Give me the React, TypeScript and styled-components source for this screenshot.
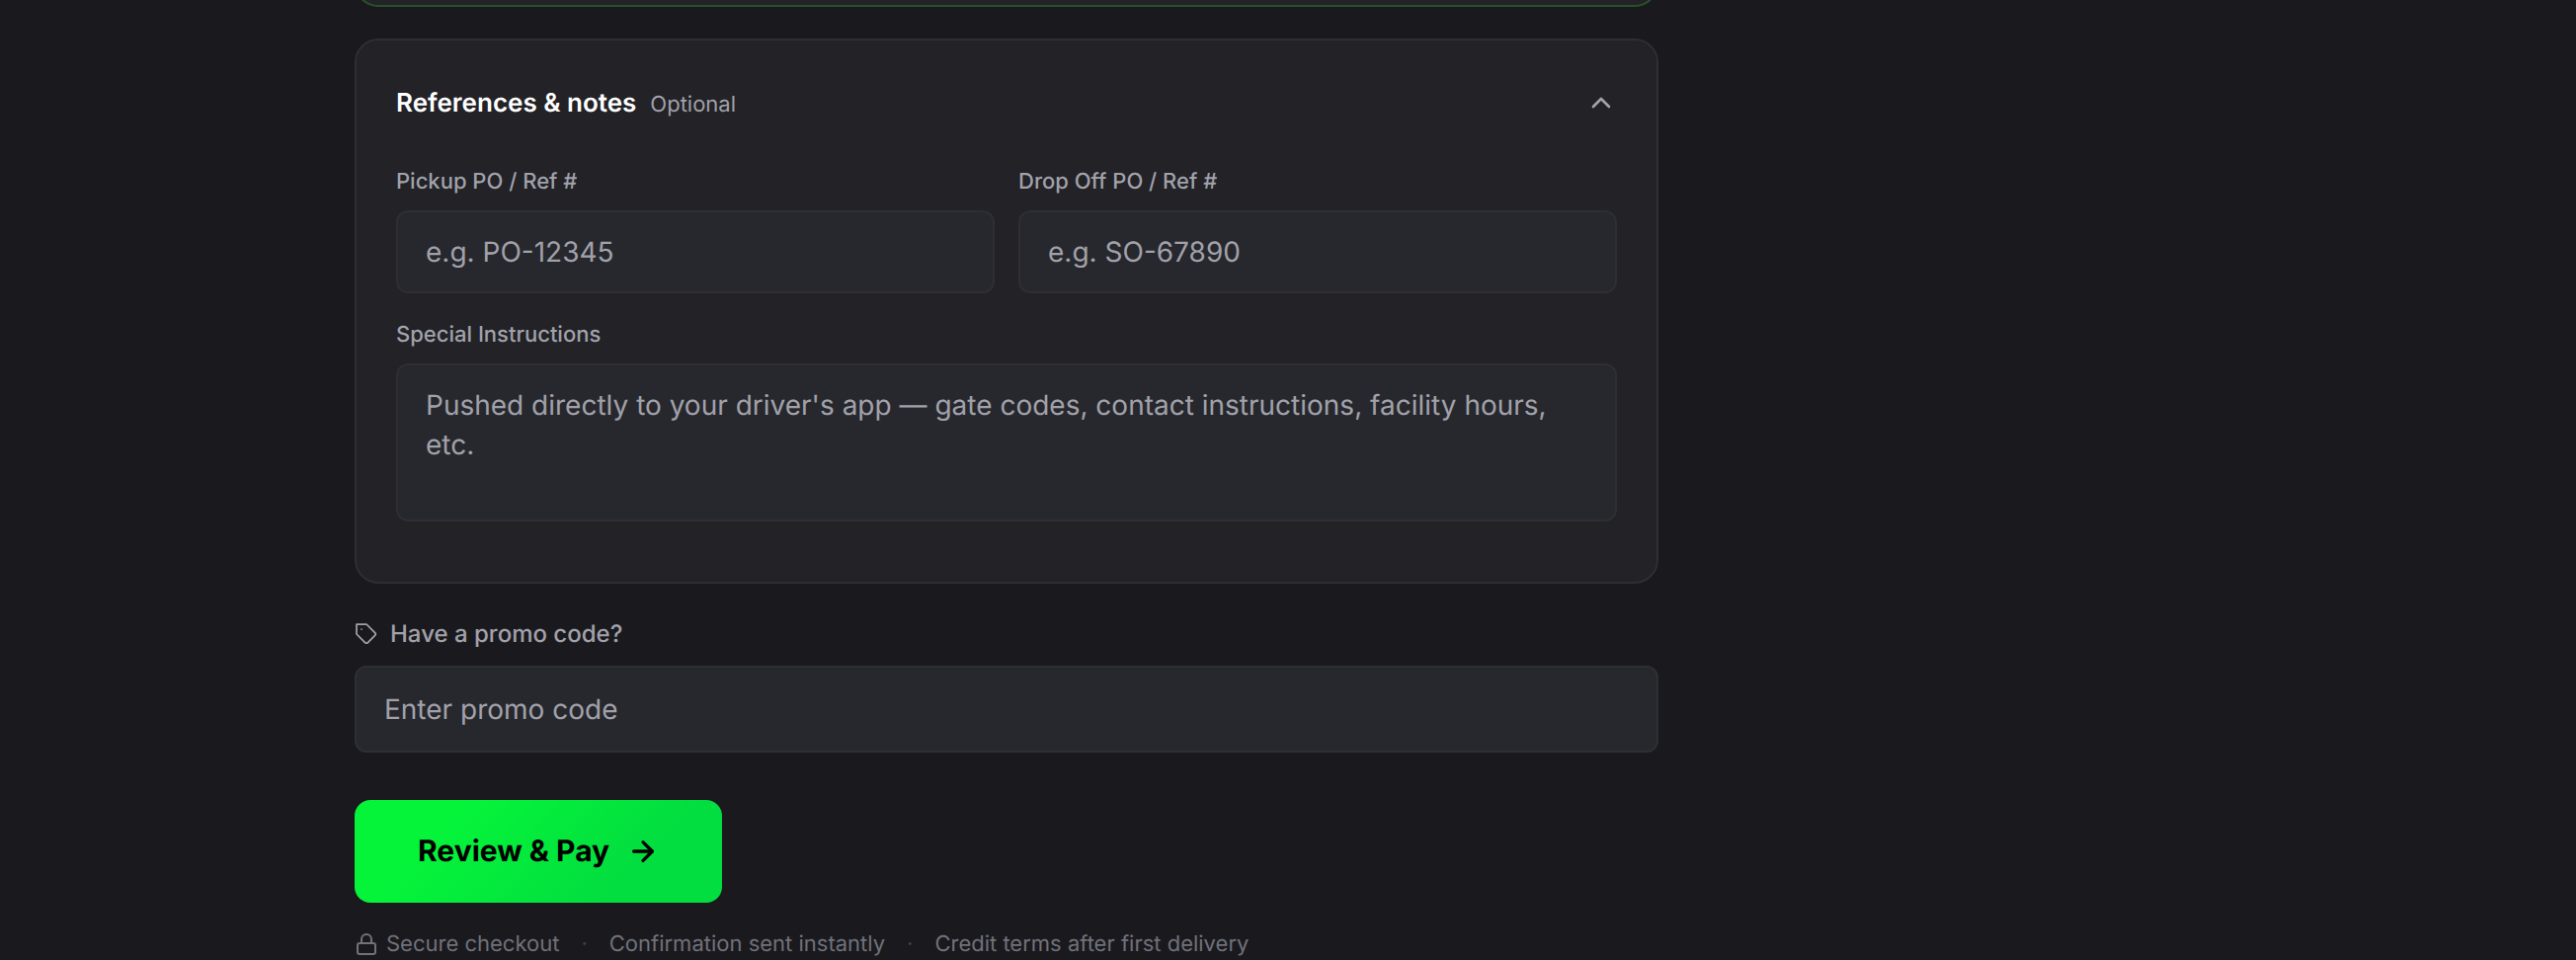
import { useState } from 'react';
import styled, { createGlobalStyle } from 'styled-components';
import { ArrowRight, ChevronUp, Lock } from 'lucide-react';
import { FiTag } from 'react-icons/fi';

const GlobalStyle = createGlobalStyle`
    * {
        box-sizing: border-box;
    }

    body {
        margin: 0;
        background-color: #1a1a1e;
        color: #a1a1aa;
        font-family: Inter, 'Liberation Sans', sans-serif;
        -webkit-font-smoothing: antialiased;
        text-rendering: geometricPrecision;
    }

    button,
    input,
    textarea {
        font-family: inherit;
        text-rendering: inherit;
    }
`;

const PageContainer = styled.main`
    max-width: 1890px;
    margin: 0 auto;
`;

const FormColumn = styled.form`
    max-width: 1320px;
`;

const PreviousSection = styled.div`
    display: flex;
    flex-direction: column;
    justify-content: flex-end;
    height: 7px;
    margin-bottom: 32px;
    overflow: hidden;
`;

const Card = styled.section<{ $active?: boolean }>`
    flex-shrink: 0;
    min-height: 64px;
    padding: 40px 40px 61px;
    background-color: #222227;
    border: 2px solid ${(props) => (props.$active ? '#27522c' : '#2e2e34')};
    border-radius: 24px;
`;

const CardHeader = styled.button`
    display: flex;
    align-items: center;
    justify-content: space-between;
    width: 100%;
    height: 46px;
    margin-bottom: 40px;
    padding: 0;
    border: none;
    background: none;
    color: #a1a1aa;
    cursor: pointer;
`;

const CardHeading = styled.span`
    display: flex;
    align-items: baseline;
    gap: 14px;
`;

const CardTitle = styled.span`
    color: #ffffff;
    font-size: 26px;
    font-weight: 600;
`;

const OptionalText = styled.span`
    font-size: 22px;
`;

const FieldGrid = styled.div`
    display: grid;
    grid-template-columns: 1fr 1fr;
    gap: 25px 24px;
`;

const Field = styled.div<{ $wide?: boolean }>`
    display: flex;
    flex-direction: column;
    gap: 11px;
    ${(props) => props.$wide && 'grid-column: 1 / -1;'}
`;

const FieldLabel = styled.label`
    font-size: 22px;
    font-weight: 500;
    line-height: 35px;
`;

const TextInput = styled.input<{ $tall?: boolean }>`
    width: 100%;
    height: ${(props) => (props.$tall ? '88px' : '84px')};
    padding: 0 28px;
    background-color: #27282d;
    border: 2px solid #2e2f34;
    border-radius: 12px;
    color: #ffffff;
    font-size: 28px;

    &::placeholder {
        color: #a1a1aa;
    }
`;

const NotesInput = styled.textarea`
    width: 100%;
    height: 160px;
    padding: 20px 28px;
    background-color: #27282d;
    border: 2px solid #2e2f34;
    border-radius: 12px;
    color: #ffffff;
    font-size: 28px;
    line-height: 40px;
    resize: none;

    &::placeholder {
        color: #a1a1aa;
    }
`;

const PromoField = styled.div`
    display: flex;
    flex-direction: column;
    gap: 14px;
    margin: 33px 0 48px;
`;

const PromoLabel = styled.label`
    display: flex;
    align-items: center;
    gap: 12px;
    font-size: 24px;
    font-weight: 500;
    line-height: 36px;
`;

const SubmitButton = styled.button`
    display: flex;
    align-items: center;
    gap: 18px;
    height: 104px;
    padding: 0 64px;
    border: none;
    border-radius: 16px;
    background: linear-gradient(135deg, #05f43a 25%, #02dd3f 75%);
    color: #000000;
    font-size: 30px;
    font-weight: 700;
    cursor: pointer;
`;

const TrustRow = styled.div`
    display: flex;
    align-items: center;
    gap: 22px;
    margin-top: 26px;
    color: #71717a;
    font-size: 22px;
    line-height: 32px;
`;

const TrustItem = styled.span`
    display: flex;
    align-items: center;
    gap: 8px;
`;

const Dot = styled.span`
    color: #3f3f46;
`;

const App = () => {
    const [open, setOpen] = useState(true);

    return (
        <>
            <GlobalStyle />
            <PageContainer>
                <FormColumn onSubmit={(e) => e.preventDefault()}>
                    <PreviousSection>
                        <Card $active />
                    </PreviousSection>
                    <Card>
                        <CardHeader
                            type="button"
                            aria-expanded={open}
                            onClick={() => setOpen(!open)}
                        >
                            <CardHeading>
                                <CardTitle>References &amp; notes</CardTitle>
                                <OptionalText>Optional</OptionalText>
                            </CardHeading>
                            <ChevronUp size={32} />
                        </CardHeader>
                        {open && (
                            <FieldGrid>
                                <Field>
                                    <FieldLabel htmlFor="pickupRef">Pickup PO / Ref #</FieldLabel>
                                    <TextInput id="pickupRef" placeholder="e.g. PO-12345" />
                                </Field>
                                <Field>
                                    <FieldLabel htmlFor="dropOffRef">Drop Off PO / Ref #</FieldLabel>
                                    <TextInput id="dropOffRef" placeholder="e.g. SO-67890" />
                                </Field>
                                <Field $wide>
                                    <FieldLabel htmlFor="instructions">Special Instructions</FieldLabel>
                                    <NotesInput
                                        id="instructions"
                                        placeholder="Pushed directly to your driver's app — gate codes, contact instructions, facility hours, etc."
                                    />
                                </Field>
                            </FieldGrid>
                        )}
                    </Card>
                    <PromoField>
                        <PromoLabel htmlFor="promo">
                            <FiTag size={24} strokeWidth={1.75} />
                            Have a promo code?
                        </PromoLabel>
                        <TextInput id="promo" $tall placeholder="Enter promo code" />
                    </PromoField>
                    <SubmitButton type="submit">
                        Review &amp; Pay
                        <ArrowRight size={32} strokeWidth={2.5} />
                    </SubmitButton>
                    <TrustRow>
                        <TrustItem>
                            <Lock size={24} strokeWidth={2} />
                            Secure checkout
                        </TrustItem>
                        <Dot>·</Dot>
                        <span>Confirmation sent instantly</span>
                        <Dot>·</Dot>
                        <span>Credit terms after first delivery</span>
                    </TrustRow>
                </FormColumn>
            </PageContainer>
        </>
    );
};

export default App;
